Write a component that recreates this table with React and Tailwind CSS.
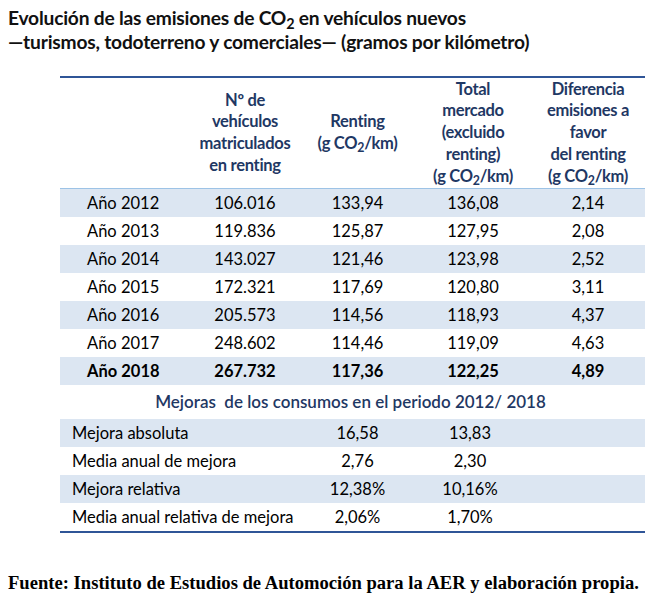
const years = [
  ['Año 2012', '106.016', '133,94', '136,08', '2,14'],
  ['Año 2013', '119.836', '125,87', '127,95', '2,08'],
  ['Año 2014', '143.027', '121,46', '123,98', '2,52'],
  ['Año 2015', '172.321', '117,69', '120,80', '3,11'],
  ['Año 2016', '205.573', '114,56', '118,93', '4,37'],
  ['Año 2017', '248.602', '114,46', '119,09', '4,63'],
  ['Año 2018', '267.732', '117,36', '122,25', '4,89'],
];

const mejoras = [
  ['Mejora absoluta', '16,58', '13,83'],
  ['Media anual de mejora', '2,76', '2,30'],
  ['Mejora relativa', '12,38%', '10,16%'],
  ['Media anual relativa de mejora', '2,06%', '1,70%'],
];

const Co2 = () => (
  <>
    CO<sub>2</sub>
  </>
);

const yearCols = 'grid grid-cols-[130px_110px_115px_116px_1fr]';
const mejoraCols = 'grid grid-cols-[240px_115px_110px_1fr]';

export default function App() {
  return (
    <div className="w-[650px] h-[607px] bg-white text-black font-['Lato','Open_Sans',sans-serif] overflow-hidden">
      <div className="pt-[6px] pl-[8px] font-bold text-[19.2px] leading-[24px] tracking-[-0.2px] text-[#111]">
        <p>Evolución de las emisiones de <Co2 /> en vehículos nuevos</p>
        <p>—turismos, todoterreno y comerciales— (gramos por kilómetro)</p>
      </div>

      <div className="ml-[60px] mr-[5px] mt-[22px] border-t-2 border-b-2 border-[#2f5597] text-[16.5px]">
        <div className={`${yearCols} h-[111px] items-center text-center font-bold text-[#1f3864] leading-[21.7px] tracking-[-0.3px] border-b border-[#9dc3e6]`}>
          <div />
          <div>Nº de<br />vehículos<br />matriculados<br />en renting</div>
          <div>Renting<br />(g <Co2 />/km)</div>
          <div>Total<br />mercado<br />(excluido<br />renting)<br />(g <Co2 />/km)</div>
          <div>Diferencia<br />emisiones a<br />favor<br />del renting<br />(g <Co2 />/km)</div>
        </div>

        {years.map((r, i) => (
          <div
            key={r[0]}
            className={`${yearCols} h-[28px] items-center text-center ${i % 2 === 0 ? 'bg-[#dce6f2]' : 'bg-white'} ${i === 6 ? 'font-bold' : ''}`}
          >
            <div className="text-left pl-[27px]">{r[0]}</div>
            <div>{r[1]}</div>
            <div>{r[2]}</div>
            <div>{r[3]}</div>
            <div>{r[4]}</div>
          </div>
        ))}

        <div className="h-[34px] flex items-center justify-center pr-[4px] text-[17px] text-[#1f3864] font-semibold">
          Mejoras&nbsp; de los consumos en el periodo 2012/ 2018
        </div>

        {mejoras.map((r, i) => (
          <div
            key={r[0]}
            className={`${mejoraCols} h-[28px] items-center text-center ${i % 2 === 0 ? 'bg-[#dce6f2]' : 'bg-white'}`}
          >
            <div className="text-left pl-[12px] whitespace-nowrap">{r[0]}</div>
            <div>{r[1]}</div>
            <div>{r[2]}</div>
            <div />
          </div>
        ))}
      </div>

      <p className="mt-[39px] pl-[8px] font-['Liberation_Serif',serif] font-bold text-[18.6px] leading-[22px]">
        Fuente: Instituto de Estudios de Automoción para la AER y elaboración propia.
      </p>
    </div>
  );
}
